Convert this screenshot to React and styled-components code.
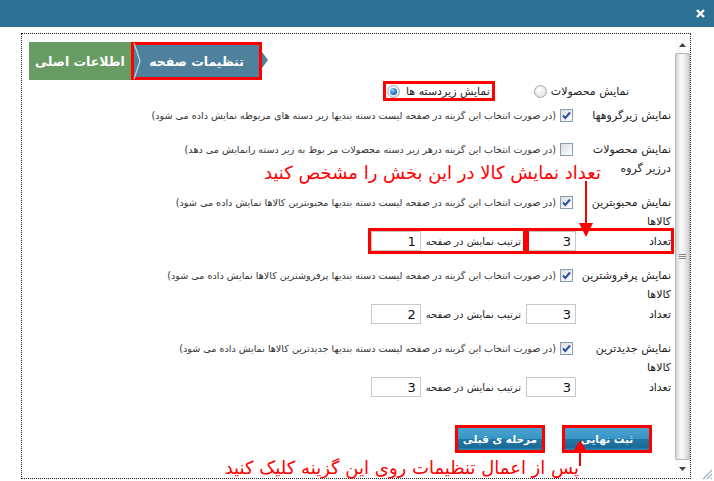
import React from 'react';
import styled, { createGlobalStyle } from 'styled-components';

const GlobalStyle = createGlobalStyle`
    html, body {
        margin: 0;
        padding: 0;
        background: #fff;
    }
    body {
        font-family: Tahoma, "DejaVu Sans", sans-serif;
    }
`;

const Window = styled.div`
    position: relative;
    width: 714px;
    height: 481px;
    overflow: hidden;
    background: #fff;
    display: flex;
    flex-direction: column;
`;

const TitleBar = styled.div`
    height: 27px;
    flex-shrink: 0;
    background: #2c7193;
    display: flex;
    align-items: center;
    justify-content: flex-end;
    padding-right: 9px;
`;

const Body = styled.div`
    padding: 6px 23px 0 21px;
`;

const Frame = styled.div`
    box-sizing: border-box;
    height: 446px;
    border: 1px dotted #222;
    display: flex;
`;

const Content = styled.div`
    position: relative;
    flex: 1;
    direction: rtl;
    padding: 8px 4px 0 0;
    color: #222;
    font-size: 11px;
`;

const Tabs = styled.div`
    direction: ltr;
    display: flex;
    padding-left: 7px;
    height: 38px;
`;

const Tab = styled.div`
    position: relative;
    box-sizing: border-box;
    width: ${p => p.$width}px;
    height: 38px;
    background: ${p => p.$color};
    color: #fff;
    font-weight: bold;
    font-size: 12.5px;
    display: flex;
    align-items: center;
    justify-content: center;
    direction: rtl;
    outline: ${p => (p.$marked ? '3px solid #f00' : 'none')};
    outline-offset: -3px;

    &::after {
        content: ${p => (p.$pointer ? "''" : 'none')};
        position: absolute;
        right: -6px;
        top: 10px;
        border-left: 6px solid ${p => p.$color};
        border-top: 8px solid transparent;
        border-bottom: 8px solid transparent;
    }
`;

const TabNotch = styled.svg`
    position: absolute;
    left: 1px;
    top: 0;
`;

const RadioRow = styled.div`
    display: flex;
    align-items: center;
    height: 20px;
    margin-top: 1px;
    padding-right: 40px;
    gap: 41px;
`;

const RadioOption = styled.label`
    display: flex;
    align-items: center;
    gap: ${p => p.$gap}px;
    height: 14px;
    padding: 0 2px 0 1px;
    outline: ${p => (p.$marked ? '3px solid #f00' : 'none')};
`;

const Radio = styled.span`
    box-sizing: border-box;
    width: 13px;
    height: 13px;
    border-radius: 50%;
    border: 1px solid #a3abb3;
    background: radial-gradient(circle at 40% 35%, #fff, #d6d9dc);
    display: flex;
    align-items: center;
    justify-content: center;

    &::after {
        content: ${p => (p.$on ? "''" : 'none')};
        width: 7px;
        height: 7px;
        border-radius: 50%;
        background: radial-gradient(circle at 35% 30%, #8fd0ff, #1a66b8 70%);
    }
`;

const Setting = styled.div`
    display: flex;
    margin-top: ${p => p.$gap}px;
    line-height: 19px;
`;

const Label = styled.div`
    width: 95px;
    flex-shrink: 0;
    white-space: pre-line;
`;

const Option = styled.div`
    display: flex;
    align-items: flex-start;
    gap: 4px;
    padding-right: 3px;
`;

const Box = styled.span`
    box-sizing: border-box;
    width: 13px;
    height: 13px;
    margin-top: 3px;
    flex-shrink: 0;
    border: 1px solid #8b9cb0;
    background: linear-gradient(135deg, #dadde2, #fff);
    display: flex;
    align-items: center;
    justify-content: center;
`;

const Desc = styled.span`
    white-space: nowrap;
    font-size: 9.6px;
    color: #333;
`;

const CountRow = styled.div`
    display: flex;
    align-items: center;
    height: 20px;
    margin-bottom: 1px;
`;

const Group = styled.div`
    display: flex;
    align-items: center;
    height: 20px;
    outline: ${p => (p.$marked ? '3px solid #f00' : 'none')};
`;

const CountLabel = styled.span`
    width: 95px;
    flex-shrink: 0;
`;

const NumberInput = styled.input`
    box-sizing: border-box;
    width: 50px;
    height: 20px;
    border: 1px solid #c8c8c8;
    padding: 0 4px;
    font: 13px Tahoma, "DejaVu Sans", sans-serif;
    color: #111;
    text-align: right;
    background: #fff;
`;

const Caption = styled.span`
    margin: 0 5px;
    white-space: nowrap;
    font-size: 10px;
`;

const Actions = styled.div`
    display: flex;
    gap: 23px;
    padding-right: 22px;
    margin-top: 31px;
`;

const Button = styled.button`
    width: 84px;
    height: 22px;
    border: 0;
    padding: 0;
    color: #fff;
    font: bold 10.5px Tahoma, "DejaVu Sans", sans-serif;
    background: linear-gradient(#4aa4d2, #3894c4 48%, #2077a8 52%, #1b6a98 88%, #3489bb);
    outline: ${p => (p.$marked ? '3px solid #f00' : 'none')};
`;

const Note = styled.div`
    position: absolute;
    right: ${p => p.$right}px;
    top: ${p => p.$top}px;
    color: #f00;
    font-size: 18px;
    line-height: 22px;
    white-space: nowrap;
`;

const Arrow = styled.svg`
    position: absolute;
    left: ${p => p.$left}px;
    top: ${p => p.$top}px;
`;

const Scrollbar = styled.div`
    width: 15px;
    margin: 2px 0 1px;
    display: flex;
    flex-direction: column;
    background: #f4f4f4;
`;

const ScrollButton = styled.div`
    height: 17px;
    flex-shrink: 0;
    display: flex;
    align-items: center;
    justify-content: center;
    background: #fbfbfb;
`;

const Thumb = styled.div`
    flex: 1;
    box-sizing: border-box;
    border: 1px solid #b7b7b7;
    border-radius: 2px;
    background: linear-gradient(90deg, #d6d6d6, #f7f7f7 35%, #f2f2f2 60%, #cfcfcf);
    display: flex;
    align-items: center;
    justify-content: center;
`;

const Grip = styled.svg`
    position: absolute;
    right: 1px;
    bottom: 1px;
`;

function Check({ checked }) {
    return (
        <Box>
            {checked && (
                <svg width="11" height="11" viewBox="0 0 11 11">
                    <path d="M2 5.5 L4.3 8 L9 2.5" fill="none" stroke="#2b4fa3" strokeWidth="2" />
                </svg>
            )}
        </Box>
    );
}

function Count({ order, marked }) {
    return (
        <CountRow>
            <Group $marked={marked}>
                <CountLabel>تعداد</CountLabel>
                <NumberInput readOnly value="3" />
            </Group>
            <Group $marked={marked}>
                <Caption>ترتیب نمایش در صفحه</Caption>
                <NumberInput readOnly value={order} />
            </Group>
        </CountRow>
    );
}

const settings = [
    { label: 'نمایش زیرگروهها', checked: true, gap: 5, text: '(در صورت انتخاب این گزینه در صفحه لیست دسته بندیها زیر دسته های مربوطه نمایش داده می شود)' },
    { label: 'نمایش محصولات\nدرزیر گروه', checked: false, gap: 15, text: '(در صورت انتخاب این گزینه درهر زیر دسته محصولات مر بوط به زیر دسته رانمایش می دهد)' },
    { label: 'نمایش محبوبترین\nکالاها', checked: true, gap: 15, order: '1', marked: true, text: '(در صورت انتخاب این گزینه در صفحه لیست دسته بندیها محبوبترین کالاها نمایش داده می شود)' },
    { label: 'نمایش پرفروشترین\nکالاها', checked: true, gap: 15, order: '2', text: '(در صورت انتخاب این گزینه در صفحه لیست دسته بندیها پرفروشترین کالاها نمایش داده می شود)' },
    { label: 'نمایش جدیدترین\nکالاها', checked: true, gap: 15, order: '3', text: '(در صورت انتخاب این گزینه در صفحه لیست دسته بندیها جدیدترین کالاها نمایش داده می شود)' },
];

export default function App() {
    return (
        <Window>
            <GlobalStyle />
            <TitleBar>
                <svg width="9" height="9" viewBox="0 0 9 9">
                    <path d="M1 1 L8 8 M8 1 L1 8" stroke="#fff" strokeWidth="2.4" />
                </svg>
            </TitleBar>
            <Body>
                <Frame>
                    <Content>
                        <Tabs>
                            <Tab $width={102} $color="#699b65">اطلاعات اصلی</Tab>
                            <Tab $width={131} $color="#4f809c" $marked $pointer>
                                <TabNotch width="10" height="38" viewBox="0 0 10 38">
                                    <polyline points="2,1 8,19 2,37" fill="none" stroke="#c3d2dc" strokeWidth="1.3" />
                                </TabNotch>
                                تنظیمات صفحه
                            </Tab>
                        </Tabs>

                        <RadioRow>
                            <RadioOption $gap={4}>
                                نمایش محصولات
                                <Radio />
                            </RadioOption>
                            <RadioOption $gap={6} $marked>
                                نمایش زیردسته ها
                                <Radio $on />
                            </RadioOption>
                        </RadioRow>

                        {settings.map(s => (
                            <React.Fragment key={s.label}>
                                <Setting $gap={s.gap}>
                                    <Label>{s.label}</Label>
                                    <Option>
                                        <Check checked={s.checked} />
                                        <Desc>{s.text}</Desc>
                                    </Option>
                                </Setting>
                                {s.order && <Count order={s.order} marked={s.marked} />}
                            </React.Fragment>
                        ))}

                        <Actions>
                            <Button $marked>ثبت نهایی</Button>
                            <Button $marked>مرحله ی قبلی</Button>
                        </Actions>

                        <Note $right={74} $top={128}>تعداد نمایش کالا در این بخش را مشخص کنید</Note>
                        <Arrow $left={557} $top={147} width="14" height="56" viewBox="0 0 14 56">
                            <line x1="7" y1="0" x2="7" y2="44" stroke="#f00" strokeWidth="2" />
                            <polygon points="0,42 14,42 7,56" fill="#f00" />
                        </Arrow>

                        <Note $right={96} $top={423}>پس از اعمال تنظیمات روی این گزینه کلیک کنید</Note>
                        <Arrow $left={551} $top={406} width="14" height="26" viewBox="0 0 14 26">
                            <line x1="7" y1="10" x2="7" y2="26" stroke="#f00" strokeWidth="2" />
                            <polygon points="0,12 14,12 7,0" fill="#f00" />
                        </Arrow>
                    </Content>

                    <Scrollbar>
                        <ScrollButton>
                            <svg width="7" height="4" viewBox="0 0 7 4"><polygon points="0,4 7,4 3.5,0" fill="#444" /></svg>
                        </ScrollButton>
                        <Thumb>
                            <svg width="7" height="7" viewBox="0 0 7 7">
                                <path d="M0 1.5 H7 M0 3.5 H7 M0 5.5 H7" stroke="#8a8a8a" strokeWidth="1" />
                            </svg>
                        </Thumb>
                        <ScrollButton>
                            <svg width="7" height="4" viewBox="0 0 7 4"><polygon points="0,0 7,0 3.5,4" fill="#444" /></svg>
                        </ScrollButton>
                    </Scrollbar>
                </Frame>
            </Body>
            <Grip width="13" height="13" viewBox="0 0 13 13">
                <path d="M12 3 L3 12 M12 7 L7 12 M12 11 L11 12" stroke="#9fb2c4" strokeWidth="1.2" />
            </Grip>
        </Window>
    );
}
